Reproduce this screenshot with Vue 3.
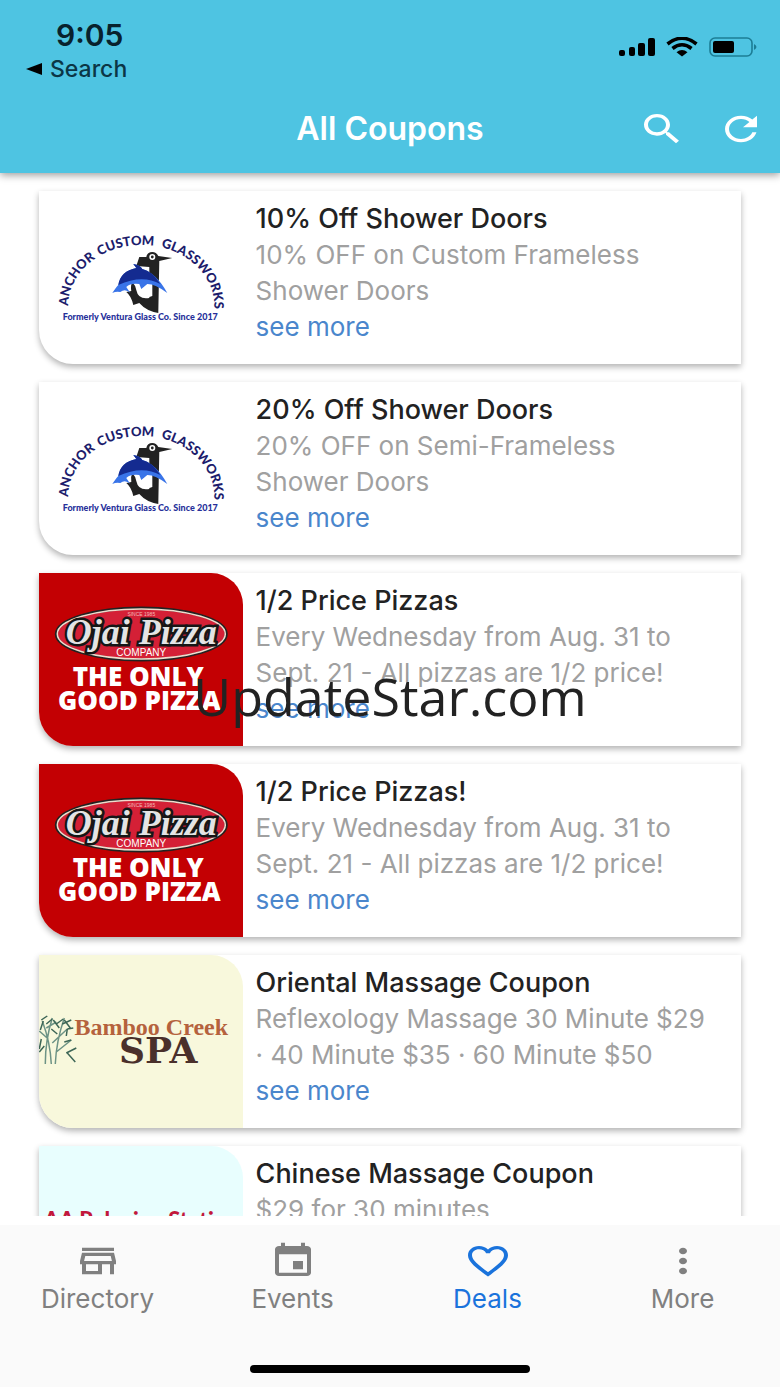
<template>
  <div class="app">
    <header class="header">
      <div class="status">
        <div class="status-left">
          <span class="time">9:05</span>
          <a href="#" class="back">
            <svg width="16" height="12" viewBox="0 0 16 12"><path d="M0 6L16 0v12z" /></svg>
            Search
          </a>
        </div>
        <div class="status-right">
          <svg width="36" height="20" viewBox="0 0 36 20">
            <rect x="0" y="13" width="6" height="6" rx="2" />
            <rect x="10" y="10" width="6" height="9" rx="2" />
            <rect x="19" y="6" width="7" height="13" rx="2" />
            <rect x="29" y="1" width="7" height="18" rx="2" />
          </svg>
          <svg width="32" height="20" viewBox="0 0 32 20">
            <path d="M1.500 7Q16-4.500 30.500 7M6.500 11.500Q16 4 25.500 11.500" fill="none" stroke="#000" stroke-width="3.600" />
            <path d="M10.500 15.200Q16 11 21.500 15.200L16 19.500z" />
          </svg>
          <svg width="48" height="20" viewBox="0 0 48 20">
            <rect x="1" y="1" width="42" height="18" rx="5" fill="none" stroke="#1c7d95" stroke-width="1.600" />
            <rect x="4" y="4" width="21" height="12" rx="2" />
            <path d="M45 7q5 3 0 6z" fill="#1c7d95" />
          </svg>
        </div>
      </div>
      <div class="toolbar">
        <h1>All Coupons</h1>
        <div class="actions">
          <button type="button" aria-label="Search coupons">
            <svg class="icon" viewBox="0 0 24 24" preserveAspectRatio="none">
              <path d="M15.500 14h-.79l-.28-.27C15.410 12.590 16 11.110 16 9.500 16 5.910 13.090 3 9.500 3S3 5.910 3 9.500 5.910 16 9.500 16c1.610 0 3.090-.59 4.230-1.570l.27.28v.79l5 4.990L20.490 19l-4.990-5zm-6 0C7.010 14 5 11.990 5 9.500S7.010 5 9.500 5 14 7.010 14 9.500 11.990 14 9.500 14z" />
            </svg>
          </button>
          <button type="button" aria-label="Refresh">
            <svg class="icon" viewBox="0 0 24 24" preserveAspectRatio="none">
              <path d="M17.650 6.350C16.200 4.900 14.210 4 12 4c-4.420 0-7.990 3.580-7.990 8s3.570 8 7.990 8c3.730 0 6.840-2.550 7.730-6h-2.080c-.82 2.330-3.040 4-5.650 4-3.310 0-6-2.690-6-6s2.690-6 6-6c1.660 0 3.140.69 4.220 1.780L13 11h7V4l-2.350 2.350z" />
            </svg>
          </button>
        </div>
      </div>
    </header>

    <main class="list">
      <article v-for="coupon in coupons" :key="coupon.id" class="card">
        <div class="picture" :class="coupon.logo">
          <svg v-if="coupon.logo === 'anchor'" viewBox="0 0 203 173">
            <path :id="'arc' + coupon.id" d="M29 115A73 61 0 0 1 175 115" fill="none" />
            <text class="arc-text">
              <textPath :href="'#arc' + coupon.id" startOffset="0">ANCHOR</textPath>
              <textPath :href="'#arc' + coupon.id" startOffset="62">CUSTOM</textPath>
              <textPath :href="'#arc' + coupon.id" startOffset="125">GLASSWORKS</textPath>
            </text>
            <path d="M100 66h7q1-5 6-5 4 0 6 4l14 2-13 3-1 52q-12-2-19-10l-6 2q-2-9-7-13l5-1q-1-5 1-9 3 3 4 8 2 10 13 8V76l-13-1z" fill="#222" />
            <path d="M101 88q9-3 12 2v15q-8 4-10-6z" fill="#fff" />
            <circle cx="113" cy="66" r="3" fill="#fff" />
            <circle cx="113" cy="66" r="1.400" fill="#222" />
            <path d="M73 102q4-6 6-8 3-14 18-17l-3-4q7 1 9 5 14 4 25 24-12-9-20-9l-6 5-2-5q-9-1-13 3l4 6q-5-5-10-1-4-1-8 1z" fill="#3974e8" />
            <path d="M79 94q2-14 18-17l-3-4q7 1 9 5 10 2 18 15-18-10-42 1z" fill="#142b90" />
            <text class="anchor-foot" x="101" y="129">Formerly Ventura Glass Co. Since 2017</text>
          </svg>

          <svg v-else-if="coupon.logo === 'pizza'" viewBox="0 0 203 173">
            <ellipse cx="102" cy="61" rx="85" ry="26" fill="#d42036" stroke="#222" stroke-width="3" />
            <ellipse cx="102" cy="61" rx="84" ry="25" fill="none" stroke="#f1dccd" stroke-width="1.500" />
            <text class="ojai" x="102" y="71">Ojai Pizza</text>
            <text class="since" x="102" y="43">SINCE 1985</text>
            <text class="company" x="102" y="83">COMPANY</text>
            <text class="slogan" x="99" y="113">THE ONLY</text>
            <text class="slogan" x="100" y="137">GOOD PIZZA</text>
          </svg>

          <svg v-else-if="coupon.logo === 'spa'" viewBox="0 0 203 173">
            <g fill="none" stroke="#6d9385" stroke-width="1.500">
              <path d="M6 109q0-24 7-46M12 109q-1-22-9-43M16 109q1-23 9-46M9 84l-9-8M13 88l15-14M17 97l15-12M7 73l10-6" />
              <path d="M2 65l6-4M4 66l-3 9M13 64l-6 5M14 65l6 8M24 64l-7 5M25 65l6 8M28 74l-1 7M28 74l6-1M32 85l-7 2M27 98l10-5M28 98l8 9M5 91l-5 6M23 69l9-4M2 84l-2 10M18 79l-6-5" stroke="#3d6656" />
            </g>
            <text class="bamboo" x="112" y="80">Bamboo Creek</text>
            <text class="spa-name" x="119" y="108">SPA</text>
          </svg>

          <svg v-else viewBox="0 0 203 173">
            <text class="station" x="102" y="82">AA Relaxing Station</text>
          </svg>
        </div>
        <div class="info">
          <h2>{{ coupon.title }}</h2>
          <p>{{ coupon.text }}</p>
          <a href="#">see more</a>
        </div>
      </article>
    </main>

    <nav class="tabs">
      <a v-for="tab in tabs" :key="tab.name" href="#" :class="{ active: tab.name === activeTab }" @click.prevent="activeTab = tab.name">
        <svg class="icon" viewBox="0 0 24 24" preserveAspectRatio="none"><path :d="tab.icon" /></svg>
        <span>{{ tab.name }}</span>
      </a>
      <div class="home-bar"></div>
    </nav>

    <div class="watermark">UpdateStar.com</div>
  </div>
</template>

<script setup>
import { ref } from 'vue'

const activeTab = ref('Deals')

const coupons = [
  { id: 1, logo: 'anchor', title: '10% Off Shower Doors', text: '10% OFF on Custom Frameless Shower Doors' },
  { id: 2, logo: 'anchor', title: '20% Off Shower Doors', text: '20% OFF on Semi-Frameless Shower Doors' },
  { id: 3, logo: 'pizza', title: '1/2 Price Pizzas', text: 'Every Wednesday from Aug. 31 to Sept. 21 - All pizzas are 1/2 price!' },
  { id: 4, logo: 'pizza', title: '1/2 Price Pizzas!', text: 'Every Wednesday from Aug. 31 to Sept. 21 - All pizzas are 1/2 price!' },
  { id: 5, logo: 'spa', title: 'Oriental Massage Coupon', text: 'Reflexology Massage 30 Minute $29 · 40 Minute $35 · 60 Minute $50' },
  { id: 6, logo: 'relax', title: 'Chinese Massage Coupon', text: '$29 for 30 minutes' }
]

const tabs = [
  {
    name: 'Directory',
    icon: 'M18.360 9l.6 3H5.040l.6-3h12.720M20 4H4v2h16V4zm0 3H4l-1 5v2h1v6h10v-6h4v6h2v-6h1v-2l-1-5zM6 18v-4h6v4H6z'
  },
  {
    name: 'Events',
    icon: 'M17 12h-5v5h5v-5zM16 1v2H8V1H6v2H5c-1.110 0-1.990.9-1.990 2L3 19c0 1.100.89 2 2 2h14c1.100 0 2-.9 2-2V5c0-1.100-.9-2-2-2h-1V1h-2zm3 18H5V8h14v11z'
  },
  {
    name: 'Deals',
    icon: 'M16.500 3c-1.740 0-3.410.81-4.500 2.090C10.910 3.810 9.240 3 7.500 3 4.420 3 2 5.420 2 8.500c0 3.780 3.400 6.860 8.550 11.540L12 21.350l1.450-1.320C18.600 15.360 22 12.280 22 8.500 22 5.420 19.580 3 16.500 3zm-4.400 15.550l-.1.1-.1-.1C7.140 14.240 4 11.390 4 8.500 4 6.500 5.500 5 7.500 5c1.540 0 3.040.99 3.570 2.360h1.870C13.460 5.990 14.960 5 16.500 5c2 0 3.500 1.500 3.500 3.500 0 2.890-3.140 5.740-7.900 10.050z'
  },
  {
    name: 'More',
    icon: 'M12 8c1.100 0 2-.9 2-2s-.9-2-2-2-2 .9-2 2 .9 2 2 2zm0 2c-1.100 0-2 .9-2 2s.9 2 2 2 2-.9 2-2-.9-2-2-2zm0 6c-1.100 0-2 .9-2 2s.9 2 2 2 2-.9 2-2-.9-2-2-2z'
  }
]
</script>

<style>
body {
  margin: 0;
  background: #fff;
}
</style>

<style scoped>
.app {
  display: flex;
  flex-direction: column;
  height: 100vh;
  position: relative;
  font-family: Inter, "Liberation Sans", sans-serif;
}

a {
  text-decoration: none;
}

.icon {
  display: block;
  width: 48px;
  height: 40px;
  fill: currentColor;
}

.header {
  background: #4ec4e2;
  padding-bottom: 24px;
  box-shadow: 0 2px 8px rgba(0, 0, 0, 0.4);
  z-index: 1;
}

.status {
  display: flex;
  justify-content: space-between;
  padding: 20px 23px 21px 26px;
}

.status-left {
  display: flex;
  flex-direction: column;
  color: #08222d;
}

.time {
  padding-left: 30px;
  font-size: 30px;
  font-weight: 600;
  line-height: 30px;
}

.back {
  display: flex;
  align-items: center;
  gap: 8px;
  font-size: 23px;
  font-weight: 500;
  line-height: 38px;
  color: #0b3646;
}

.back svg {
  fill: #000;
}

.status-right {
  display: flex;
  gap: 11px;
  padding-top: 17px;
}

.toolbar {
  display: grid;
  grid-template-columns: 1fr auto 1fr;
  align-items: center;
  padding: 0 15px;
  color: #fff;
}

.toolbar h1 {
  grid-column: 2;
  margin: 0;
  font-size: 32px;
  font-weight: 600;
  line-height: 36px;
}

.actions {
  display: flex;
  justify-content: flex-end;
  gap: 31px;
}

.actions button {
  padding: 0;
  border: 0;
  background: none;
  color: #fff;
}

.list {
  flex: 1;
  min-height: 0;
  overflow: hidden;
  display: flex;
  flex-direction: column;
  gap: 18px;
  margin-bottom: 9px;
  padding: 18px 39px 0;
}

.card {
  display: flex;
  flex-shrink: 0;
  min-height: 173px;
  background: #fff;
  border-bottom-left-radius: 34px;
  box-shadow: 0 3px 6px rgba(0, 0, 0, 0.3);
}

.picture {
  flex: 0 0 29%;
  border-top-right-radius: 32px;
  border-bottom-left-radius: 34px;
  overflow: hidden;
}

.picture svg {
  display: block;
  width: 100%;
  height: 173px;
}

.picture text {
  text-anchor: middle;
}

.pizza {
  background: #c30003;
}

.spa {
  background: #f8f8dc;
}

.relax {
  background: #e8fefe;
}

.picture .arc-text {
  text-anchor: start;
  font: 900 13px Lato, sans-serif;
  fill: #1c1c6c;
}

.anchor-foot {
  font: 900 9px Lato, sans-serif;
  fill: #26309a;
}

.since {
  font: 5px "Liberation Sans", sans-serif;
  fill: #f3b8b8;
}

.ojai {
  font: italic bold 36px "Liberation Serif", serif;
  fill: #e4e4e4;
  stroke: #161616;
  stroke-width: 5px;
  paint-order: stroke;
}

.company {
  font: 10px "Liberation Sans", sans-serif;
  fill: #fff;
}

.slogan {
  font: 800 26px "Open Sans", sans-serif;
  fill: #fff;
}

.bamboo {
  font: bold 24px "Liberation Serif", serif;
  fill: #b5623d;
}

.spa-name {
  font: bold 36px "DejaVu Serif", serif;
  fill: #4a302b;
}

.station {
  font: 900 22px Lato, sans-serif;
  fill: #c2183c;
}

.info {
  flex: 1;
  padding: 10px 29px 10px 13px;
  font-size: 26px;
  line-height: 36px;
}

.info h2 {
  margin: 0;
  font-size: 27px;
  font-weight: 500;
  color: #222;
}

.info p {
  margin: 0;
  color: #a0a0a0;
}

.info a {
  color: #4a86cc;
}

.tabs {
  display: flex;
  flex-wrap: wrap;
  padding-top: 16px;
  background: #fafafa;
}

.tabs a {
  display: flex;
  flex: 0 0 25%;
  flex-direction: column;
  align-items: center;
  color: #808080;
  font-size: 26px;
  line-height: 36px;
}

.tabs .active {
  color: #1a73dc;
}

.home-bar {
  width: 36%;
  height: 8px;
  margin: 48px auto 14px;
  border-radius: 4px;
  background: #000;
}

.watermark {
  position: absolute;
  top: 50%;
  left: 50%;
  transform: translate(-50%, -50%);
  padding-top: 4px;
  font-family: "Open Sans", sans-serif;
  font-size: 52px;
  line-height: 70px;
  color: #222;
  pointer-events: none;
}
</style>
